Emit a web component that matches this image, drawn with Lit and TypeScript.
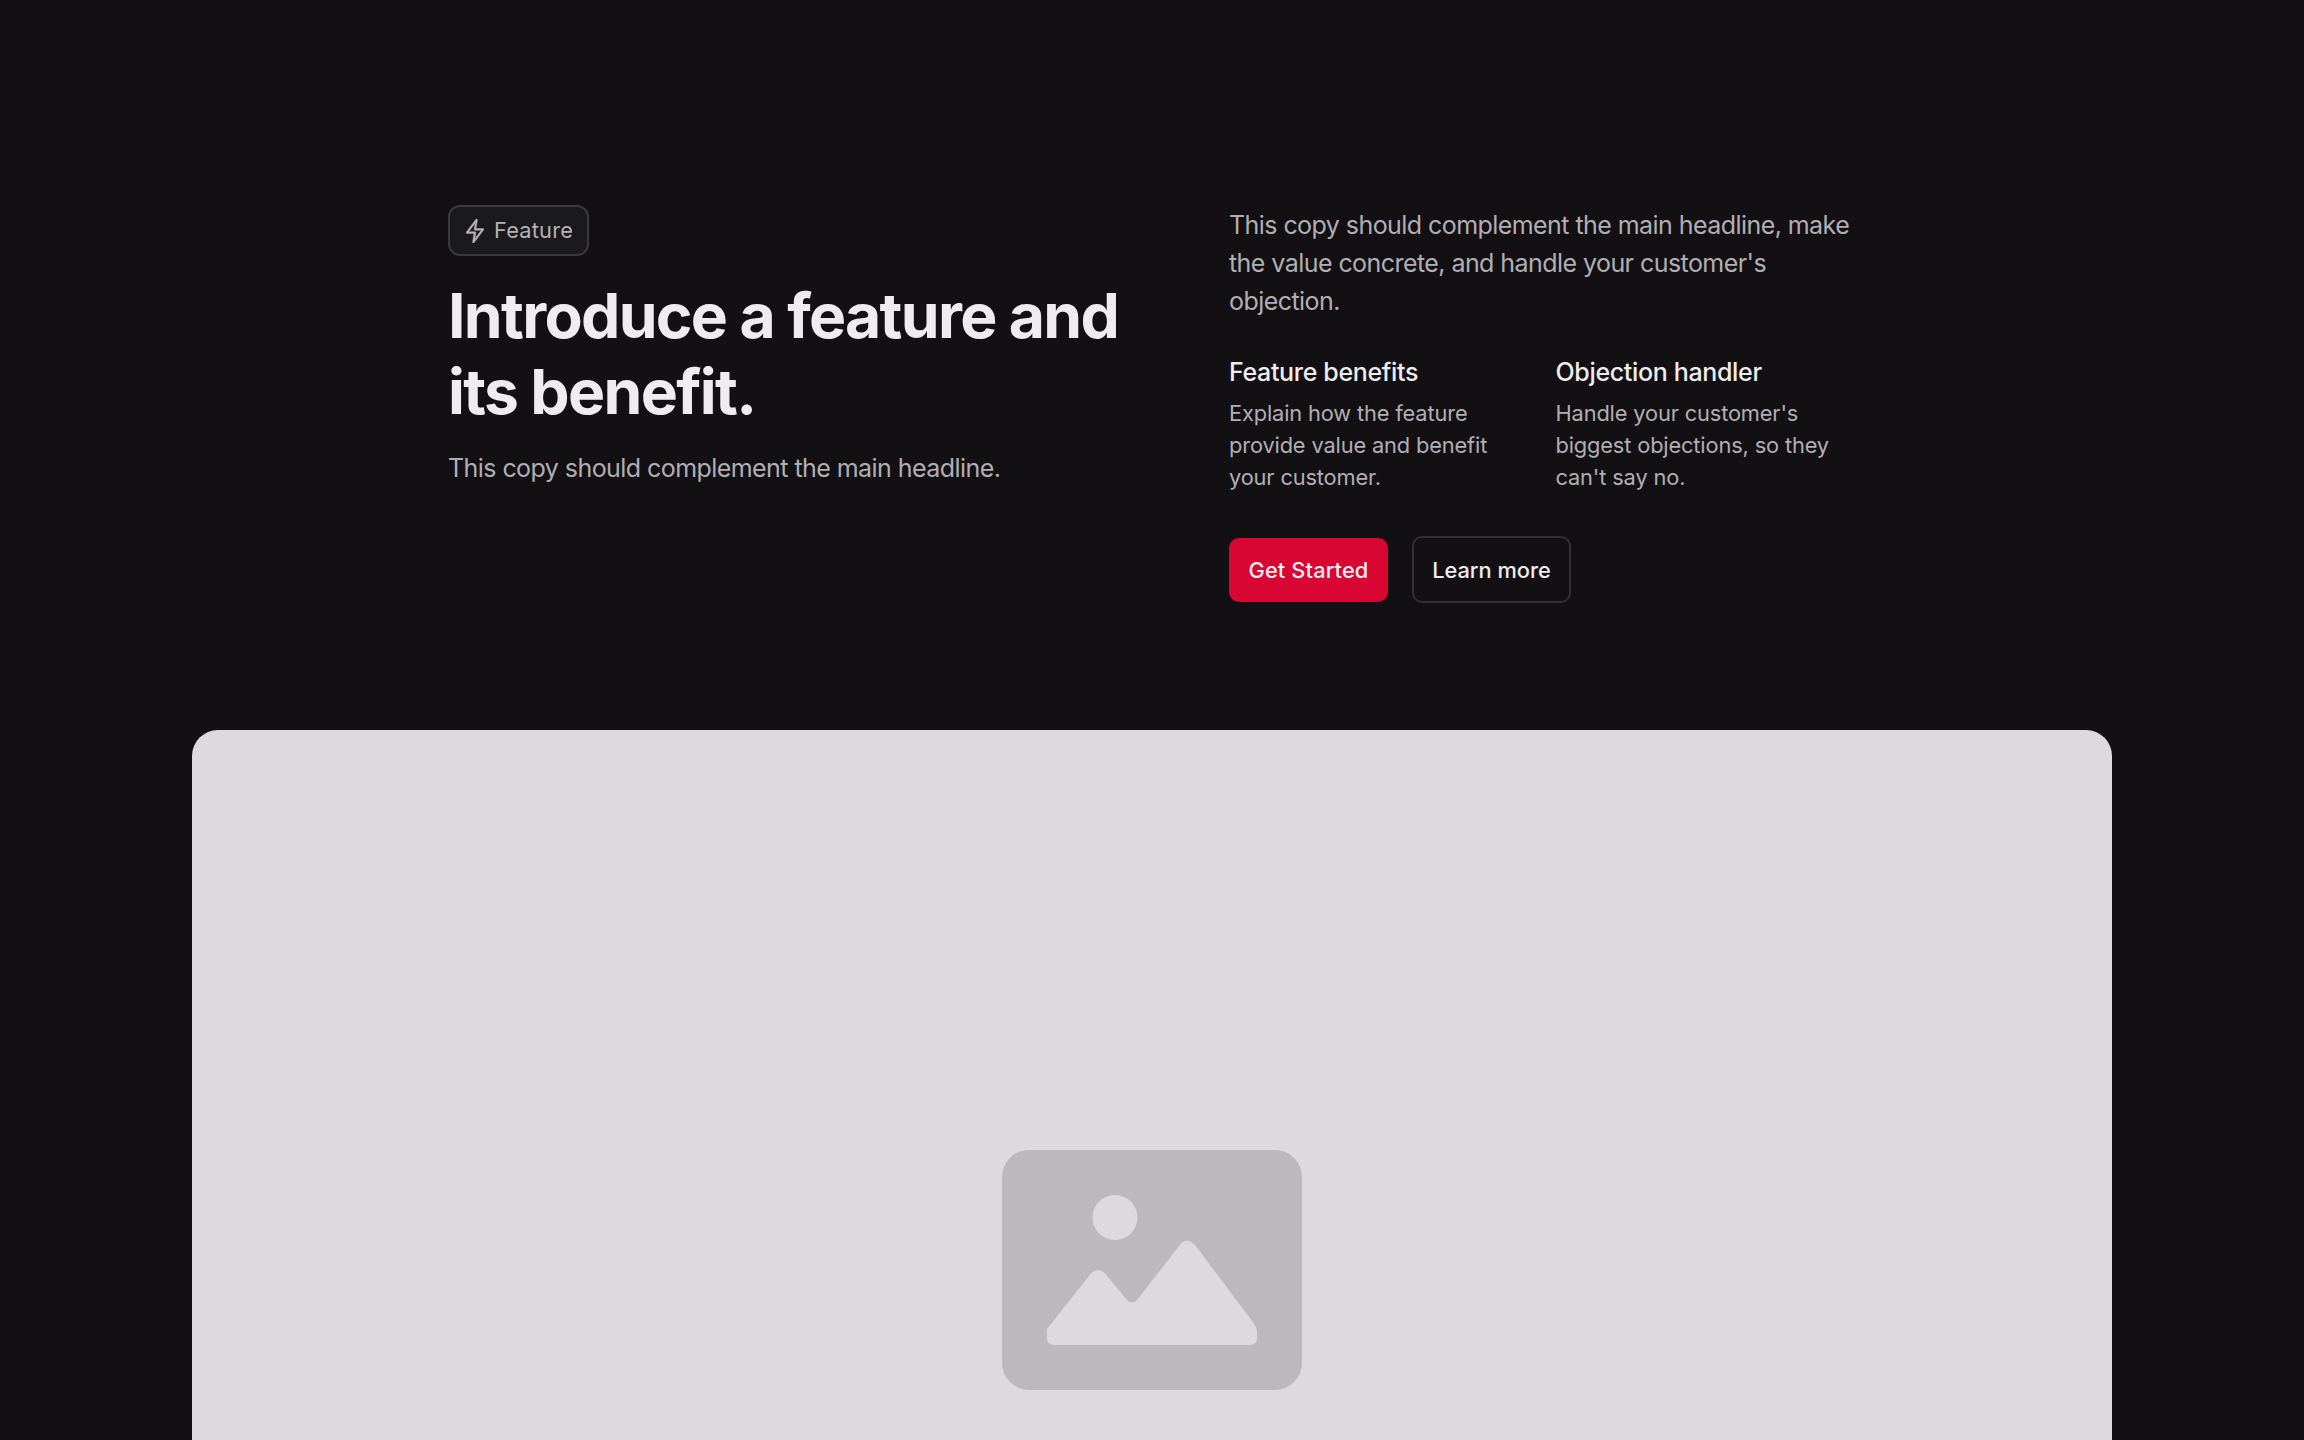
import { LitElement, css, html } from "lit";
import { customElement } from "lit/decorators.js";

interface Benefit {
  title: string;
  text: string;
}

const benefits: Benefit[] = [
  {
    title: "Feature benefits",
    text: "Explain how the feature provide value and benefit your customer.",
  },
  {
    title: "Objection handler",
    text: "Handle your customer's biggest objections, so they can't say no.",
  },
];

@customElement("feature-badge")
export class FeatureBadge extends LitElement {
  render() {
    return html`
      <svg viewBox="0 0 15 15" width="24" height="24" aria-hidden="true">
        <path
          fill="currentColor"
          stroke="currentColor"
          stroke-width="0.35"
          fill-rule="evenodd"
          clip-rule="evenodd"
          d="M8.69667 0.0403541C8.90859 0.131038 9.03106 0.354857 8.99316 0.582235L8.0902 6.00001H12.5C12.6893 6.00001 12.8625 6.10701 12.9472 6.27641C13.0319 6.4458 13.0136 6.6485 12.8999 6.80001L6.89997 14.8C6.76166 14.9844 6.51521 15.0503 6.30328 14.9597C6.09135 14.869 5.96888 14.6452 6.00678 14.4178L6.90974 9H2.49999C2.31061 9 2.13748 8.893 2.05278 8.72361C1.96809 8.55422 1.98636 8.35151 2.09999 8.2L8.09997 0.200038C8.23828 0.0156255 8.48474 -0.0503301 8.69667 0.0403541ZM3.49999 8.00001H7.49997C7.64695 8.00001 7.78648 8.06467 7.88148 8.17682C7.97648 8.28896 8.01733 8.43723 7.99317 8.5822L7.33027 12.5596L11.5 7.00001H7.49997C7.353 7.00001 7.21347 6.93534 7.11846 6.8232C7.02346 6.71105 6.98261 6.56279 7.00678 6.41781L7.66968 2.44042L3.49999 8.00001Z"
        />
      </svg>
      <span><slot></slot></span>
    `;
  }

  static styles = css`
    :host {
      display: inline-flex;
      align-items: center;
      gap: 7px;
      box-sizing: border-box;
      width: 141px;
      height: 51px;
      padding-left: 13px;
      border: 2px solid #3a393c;
      border-radius: 12px;
      background: #1a191b;
      color: #b5b2b8;
      font-size: 21.8px;
      line-height: 32px;
      letter-spacing: 0.2px;
    }
    span {
      padding-bottom: 2px;
      white-space: nowrap;
    }
  `;
}

@customElement("image-placeholder")
export class ImagePlaceholder extends LitElement {
  render() {
    return html`
      <svg viewBox="0 0 300 240" width="300" height="240" aria-hidden="true">
        <rect width="300" height="240" rx="27" fill="#bbb9bc" />
        <circle cx="113" cy="67.5" r="22.5" fill="#dcdadd" />
        <path
          fill="#dcdadd"
          d="M45 179 L88.500 124 Q96 116 103.500 124 L125 150 Q129.500 155 135 150 L177 96 Q184 86 193 95 L250 171 Q255 177 255 183 V188 Q255 195 247 195 H53 Q45 195 45 188 Z"
        />
      </svg>
    `;
  }

  static styles = css`
    :host {
      display: flex;
      justify-content: center;
      box-sizing: border-box;
      height: 1080px;
      padding-top: 419.5px;
      border-radius: 26px;
      background: #dcdadd;
    }
    svg {
      display: block;
    }
  `;
}

@customElement("app-root")
export class AppRoot extends LitElement {
  render() {
    return html`
      <section>
        <div class="content">
          <div class="intro">
            <feature-badge>Feature</feature-badge>
            <h1>Introduce a feature and its benefit.</h1>
            <p class="lead">This copy should complement the main headline.</p>
          </div>
          <div class="details">
            <p class="lead">
              This copy should complement the main headline, make the value
              concrete, and handle your customer's objection.
            </p>
            <div class="benefits">
              ${benefits.map(
                (benefit) => html`
                  <div>
                    <h2>${benefit.title}</h2>
                    <p>${benefit.text}</p>
                  </div>
                `
              )}
            </div>
            <div class="actions">
              <button class="primary">Get Started</button>
              <button class="outline">Learn more</button>
            </div>
          </div>
        </div>
        <image-placeholder></image-placeholder>
      </section>
    `;
  }

  static styles = css`
    :host {
      display: block;
      height: 1440px;
      overflow: hidden;
      background: #121013;
      color: #eeecef;
      font-family: Inter, "Liberation Sans", sans-serif;
    }
    section {
      width: 1920px;
      margin: 0 auto;
      padding-top: 205px;
    }
    .content {
      display: grid;
      grid-template-columns: 704px 627px;
      column-gap: 77px;
      height: 525px;
      padding: 0 256px;
    }
    h1,
    h2,
    p {
      margin: 0;
    }
    h1 {
      margin-top: 22px;
      font-size: 62.4px;
      font-weight: 700;
      line-height: 76px;
      letter-spacing: -1.67px;
    }
    feature-badge {
      vertical-align: top;
    }
    .lead {
      color: #b1afb3;
      font-size: 25px;
      line-height: 38px;
      letter-spacing: -0.56px;
    }
    .intro .lead {
      margin-top: 19px;
    }
    .details {
      padding-top: 1px;
    }
    .benefits {
      display: grid;
      grid-template-columns: 1fr 1fr;
      column-gap: 26px;
      margin-top: 33px;
    }
    h2 {
      font-size: 25px;
      font-weight: 500;
      line-height: 38px;
      letter-spacing: -0.34px;
    }
    .benefits p {
      margin-top: 6px;
      color: #b1afb3;
      font-size: 21.8px;
      line-height: 32px;
      letter-spacing: -0.14px;
    }
    .actions {
      display: flex;
      align-items: center;
      gap: 24px;
      margin-top: 43px;
    }
    button {
      box-sizing: border-box;
      padding: 0;
      border-radius: 10px;
      color: #eeecef;
      font-family: inherit;
      font-size: 21.8px;
      font-weight: 500;
      line-height: 32px;
    }
    .primary {
      width: 159px;
      height: 64px;
      border: none;
      background: #d90533;
      color: #fdeef0;
      letter-spacing: 0.12px;
    }
    .outline {
      width: 159px;
      height: 67px;
      border: 2px solid #313033;
      background: transparent;
    }
  `;
}
